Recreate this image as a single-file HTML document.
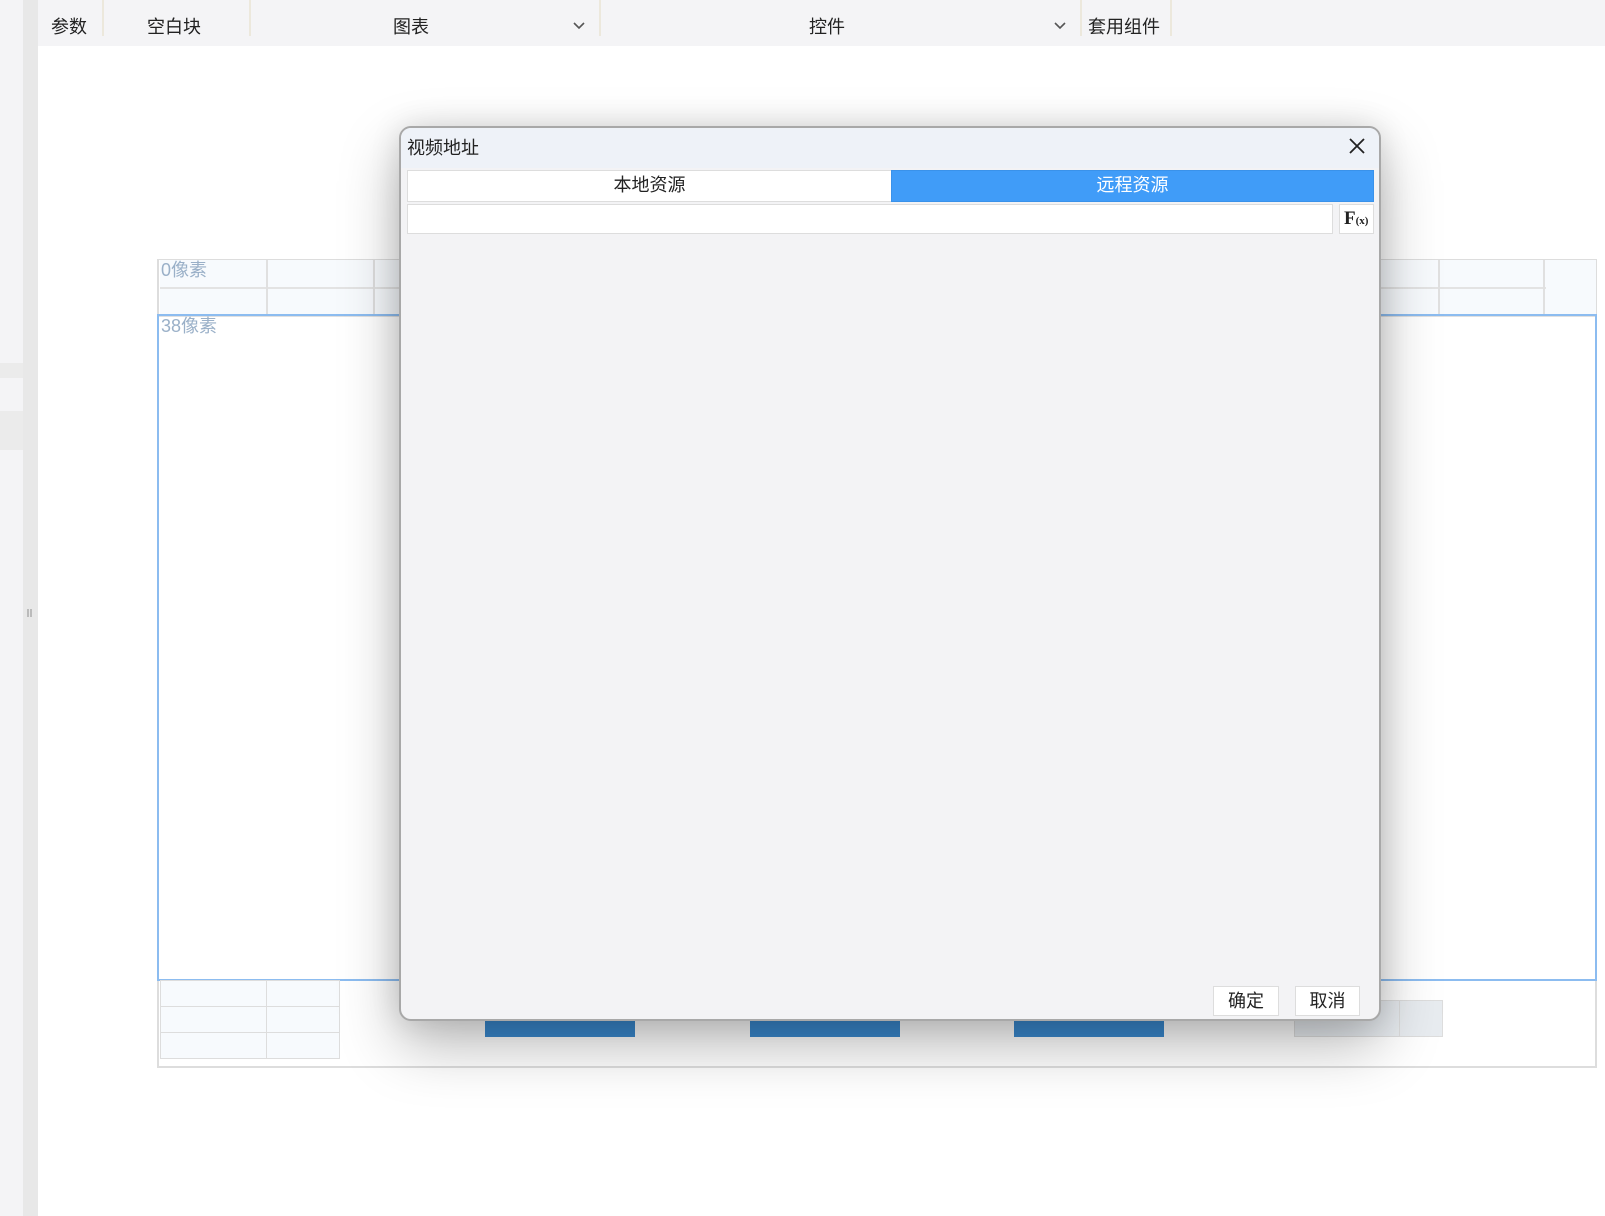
<!DOCTYPE html>
<html><head><meta charset="utf-8"><style>
*{margin:0;padding:0;box-sizing:border-box}
body{width:1605px;height:1216px;background:#fff;position:relative;overflow:hidden;font-family:"Liberation Sans","Noto Sans CJK SC",sans-serif;color:#222}
.a{position:absolute}
.tb{font-size:18px;top:16px;line-height:22px}
.sep{top:0;width:2px;height:36px;background:#ece8dc}
.cell{position:absolute;border:1px solid #ddd;background:#f7fafd}
.blue{background:#3a8ad0}
</style></head><body>
<div class="a" style="left:0;top:0;width:23px;height:1216px;background:#f4f4f6"></div>
<div class="a" style="left:0;top:363px;width:23px;height:15px;background:#ebebeb"></div>
<div class="a" style="left:0;top:411px;width:23px;height:39px;background:#ebebeb"></div>
<div class="a" style="left:23px;top:0;width:15px;height:1216px;background:#e8e8e8"></div>
<div class="a" style="left:27px;top:609px;width:2px;height:8px;background:#bbb"></div>
<div class="a" style="left:30px;top:609px;width:2px;height:8px;background:#bbb"></div>
<div class="a" style="left:38px;top:0;width:1567px;height:46px;background:#f4f4f6"></div>
<div class="a sep" style="left:102px"></div><div class="a sep" style="left:249px"></div>
<div class="a sep" style="left:599px"></div><div class="a sep" style="left:1080px"></div><div class="a sep" style="left:1170px"></div>
<div class="a tb" style="left:51px">参数</div>
<div class="a tb" style="left:147px">空白块</div>
<div class="a tb" style="left:393px">图表</div>
<div class="a tb" style="left:809px">控件</div>
<div class="a tb" style="left:1088px">套用组件</div>
<svg class="a" style="left:572px;top:21px" width="14" height="10"><path d="M2 2l5 5 5-5" stroke="#555" stroke-width="1.6" fill="none"/></svg>
<svg class="a" style="left:1053px;top:21px" width="14" height="10"><path d="M2 2l5 5 5-5" stroke="#555" stroke-width="1.6" fill="none"/></svg>
<div class="a" style="left:157px;top:259px;width:1440px;height:809px;border:2px solid #ddd;border-top:1px solid #ddd"></div>
<div class="a" style="left:160px;top:260px;width:1436px;height:64px;background:#f7fafd"></div>
<div class="a" style="left:160px;top:287px;width:1386px;height:2px;background:#e3e3e3"></div>
<div class="a" style="left:266px;top:260px;width:2px;height:64px;background:#e0e0e0"></div>
<div class="a" style="left:373px;top:260px;width:2px;height:64px;background:#e0e0e0"></div>
<div class="a" style="left:1438px;top:260px;width:2px;height:64px;background:#e0e0e0"></div>
<div class="a" style="left:1543px;top:260px;width:2px;height:64px;background:#e0e0e0"></div>
<div class="a" style="left:157px;top:314px;width:1440px;height:667px;border:2px solid #8cbcf0;background:#fff"></div>
<div class="a" style="left:159px;top:316px;width:1436px;height:1px;background:#e0e0e0"></div>
<div class="a" style="left:161px;top:256px;font-size:18px;color:#9ab0c8">0像素</div>
<div class="a" style="left:161px;top:312px;font-size:18px;color:#9ab0c8">38像素</div>
<div class="cell" style="left:160px;top:980px;width:107px;height:27px"></div>
<div class="cell" style="left:266px;top:980px;width:74px;height:27px"></div>
<div class="cell" style="left:160px;top:1006px;width:107px;height:27px"></div>
<div class="cell" style="left:266px;top:1006px;width:74px;height:27px"></div>
<div class="cell" style="left:160px;top:1032px;width:107px;height:27px"></div>
<div class="cell" style="left:266px;top:1032px;width:74px;height:27px"></div>
<div class="a blue" style="left:485px;top:1012px;width:150px;height:25px"></div>
<div class="a blue" style="left:750px;top:1012px;width:150px;height:25px"></div>
<div class="a blue" style="left:1014px;top:1012px;width:150px;height:25px"></div>
<div class="cell" style="left:1294px;top:1000px;width:106px;height:37px;background:#e8ecf0"></div>
<div class="cell" style="left:1399px;top:1000px;width:44px;height:37px;background:#e8ecf0"></div>
<div class="a" style="left:399px;top:126px;width:982px;height:895px;border:2px solid #a8a8a8;border-radius:12px;background:#f3f3f5;box-shadow:0 24px 60px rgba(0,0,0,.28),0 0 30px rgba(0,0,0,.12);overflow:hidden">
<div class="a" style="left:0;top:0;width:980px;height:40px;background:#eef2f8"></div>
<div class="a" style="left:6px;top:6px;font-size:18px">视频地址</div>
<svg class="a" style="left:946px;top:8px" width="20" height="20"><path d="M3 3l14 14M17 3L3 17" stroke="#222" stroke-width="1.8"/></svg>
<div class="a" style="left:6px;top:42px;width:485px;height:32px;background:#fff;border:1px solid #ddd;text-align:center;font-size:18px;line-height:29px">本地资源</div>
<div class="a" style="left:490px;top:42px;width:483px;height:32px;background:#409cf8;border:1px solid #3a92ea;text-align:center;font-size:18px;line-height:29px;color:#fff">远程资源</div>
<div class="a" style="left:6px;top:76px;width:926px;height:30px;background:#fff;border:1px solid #ddd"></div>
<div class="a" style="left:938px;top:76px;width:35px;height:30px;background:#fff;border:1px solid #ddd;font-family:'Liberation Serif',serif;font-weight:bold;font-size:19px;line-height:27px;padding-left:4px">F<span style="font-size:11px">(x)</span></div>
<div class="a" style="left:812px;top:858px;width:66px;height:30px;background:#fff;border:1px solid #ddd;text-align:center;font-size:18px;line-height:28px">确定</div>
<div class="a" style="left:894px;top:858px;width:65px;height:30px;background:#fff;border:1px solid #ddd;text-align:center;font-size:18px;line-height:28px">取消</div>
</div>
</body></html>
